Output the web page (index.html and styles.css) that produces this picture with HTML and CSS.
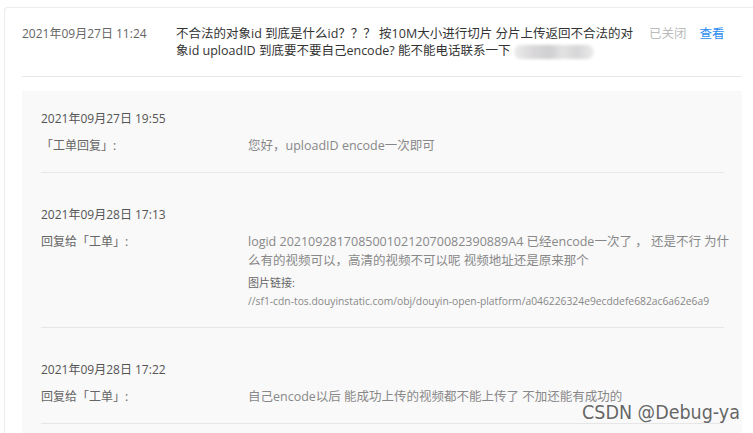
FILE: index.html
```html
<!DOCTYPE html>
<html lang="zh-CN">
<head>
  <meta charset="UTF-8">
  <title>工单详情</title>
  <link rel="stylesheet" href="styles.css">
</head>
<body>
  <div class="ticket">
    <div class="ticket-head">
      <div class="ticket-date">2021年09月27日 11:24</div>
      <div class="ticket-title">不合法的对象id 到底是什么id？？？ 按10M大小进行切片 分片上传返回不合法的对象id uploadID 到底要不要自己encode? 能不能电话联系一下 <span class="masked"></span></div>
      <div class="ticket-status">已关闭</div>
      <a class="ticket-link" href="#">查看</a>
    </div>

    <div class="replies">
      <div class="reply">
        <div class="reply-date">2021年09月27日 19:55</div>
        <div class="reply-row">
          <div class="reply-label">「工单回复」:</div>
          <div class="reply-text">您好，uploadID encode一次即可</div>
        </div>
      </div>

      <div class="reply">
        <div class="reply-date">2021年09月28日 17:13</div>
        <div class="reply-row">
          <div class="reply-label">回复给「工单」:</div>
          <div class="reply-text">
            logid 20210928170850010212070082390889A4 已经encode一次了 ， 还是不行 为什么有的视频可以，高清的视频不可以呢 视频地址还是原来那个
            <div class="reply-pic-title">图片链接:</div>
            <div class="reply-pic-url">//sf1-cdn-tos.douyinstatic.com/obj/douyin-open-platform/a046226324e9ecddefe682ac6a62e6a9</div>
          </div>
        </div>
      </div>

      <div class="reply">
        <div class="reply-date">2021年09月28日 17:22</div>
        <div class="reply-row">
          <div class="reply-label">回复给「工单」:</div>
          <div class="reply-text">自己encode以后 能成功上传的视频都不能上传了 不加还能有成功的</div>
        </div>
      </div>
    </div>
  </div>

  <div class="watermark">CSDN @Debug-ya</div>
</body>
</html>
```

FILE: styles.css
```css
body {
  margin: 0;
  background-color: #fff;
  font-family: "Open Sans", "Noto Sans CJK SC", sans-serif;
  font-size: 12px;
  overflow: hidden;
}
.ticket {
  margin: 7px 0 0 4px;
  padding: 0 0 0 17px;
  border: 1px solid #ececec;
  border-right: none;
  border-radius: 4px 0 0 4px;
  height: 600px;
}
.ticket-head {
  display: flex;
  align-items: flex-start;
  margin-right: 11px;
  padding: 17px 0 17px;
  border-bottom: 1px solid #e8e8e8;
}
.ticket-date {
  width: 154px;
  flex-shrink: 0;
  color: #666;
  line-height: 18px;
}
.ticket-title {
  width: 466px;
  color: #333;
  line-height: 17px;
  font-size: 12.5px;
}
.masked {
  display: inline-block;
  width: 80px;
  height: 14px;
  vertical-align: middle;
  border-radius: 7px;
  background: linear-gradient(90deg, #ececec, #d8d6d8 25%, #cfcfd2 45%, #e2e2e2 60%, #d6d6d8 80%, #ededee);
  filter: blur(1.5px);
}
.ticket-status {
  margin-left: 7px;
  color: #bbb;
  line-height: 18px;
  font-size: 12.5px;
}
.ticket-link {
  margin-left: 13px;
  color: #2b8cf0;
  line-height: 18px;
  font-size: 12.5px;
  text-decoration: none;
}
.replies {
  margin: 14px 11px 0 0;
  padding: 0 18px 0 19px;
  background-color: #f9f9f9;
  height: 400px;
}
.reply {
  padding: 19px 0 17px;
  border-bottom: 1px solid #e6e6e6;
}
.reply + .reply {
  padding-top: 33px;
}
.reply-date {
  color: #555;
  line-height: 18px;
  margin-bottom: 8px;
}
.reply-row {
  display: flex;
}
.reply-label {
  width: 207px;
  flex-shrink: 0;
  color: #666;
  line-height: 19px;
}
.reply-text {
  color: #888;
  font-size: 12.5px;
  line-height: 19px;
  width: 492px;
  flex-shrink: 0;
}
.reply-pic-title {
  margin-top: 4px;
  font-size: 11px;
  color: #666;
  line-height: 18px;
}
.reply-pic-url {
  font-size: 10.3px;
  color: #888;
  line-height: 18px;
  white-space: nowrap;
}
.watermark {
  position: absolute;
  left: 582px;
  top: 403px;
  font-family: "DejaVu Sans Condensed", "DejaVu Sans", sans-serif;
  font-size: 19.5px;
  line-height: 20px;
  color: #666;
  text-shadow: 0 0 2px #fff, 0 0 2px #fff;
}
```
